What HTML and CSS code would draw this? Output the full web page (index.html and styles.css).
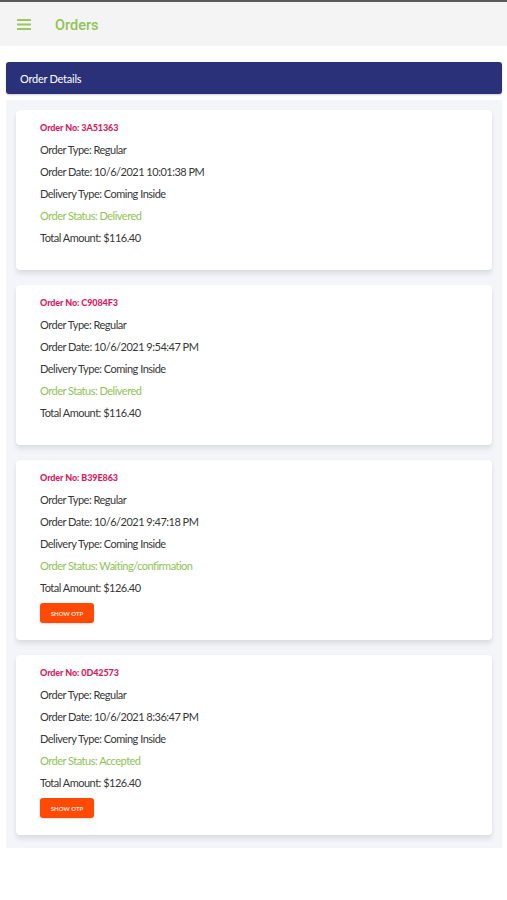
FILE: index.html
```html
<!DOCTYPE html>
<html>
<head>
<meta charset="utf-8">
<link rel="stylesheet" href="styles.css">
</head>
<body>
<header class="topbar">
  <svg class="menu" width="14" height="11" viewBox="0 0 14 11"><rect x="0" y="0" width="14" height="2" fill="#9bc760"/><rect x="0" y="4.5" width="14" height="2" fill="#9bc760"/><rect x="0" y="9" width="14" height="2" fill="#9bc760"/></svg>
  <span class="title">Orders</span>
</header>
<main class="page">
  <div class="section-bar">Order Details</div>
  <div class="list">
    <div class="card">
      <div class="details">
        <div class="row order-no">Order No: 3A51363</div>
        <div class="row">Order Type: Regular</div>
        <div class="row">Order Date: 10/6/2021 10:01:38 PM</div>
        <div class="row">Delivery Type: Coming Inside</div>
        <div class="row status">Order Status: Delivered</div>
        <div class="row">Total Amount: $116.40</div>
      </div>
    </div>
    <div class="card">
      <div class="details">
        <div class="row order-no">Order No: C9084F3</div>
        <div class="row">Order Type: Regular</div>
        <div class="row">Order Date: 10/6/2021 9:54:47 PM</div>
        <div class="row">Delivery Type: Coming Inside</div>
        <div class="row status">Order Status: Delivered</div>
        <div class="row">Total Amount: $116.40</div>
      </div>
    </div>
    <div class="card">
      <div class="details">
        <div class="row order-no">Order No: B39E863</div>
        <div class="row">Order Type: Regular</div>
        <div class="row">Order Date: 10/6/2021 9:47:18 PM</div>
        <div class="row">Delivery Type: Coming Inside</div>
        <div class="row status">Order Status: Waiting/confirmation</div>
        <div class="row">Total Amount: $126.40</div>
      </div>
      <button class="otp">SHOW OTP</button>
    </div>
    <div class="card">
      <div class="details">
        <div class="row order-no">Order No: 0D42573</div>
        <div class="row">Order Type: Regular</div>
        <div class="row">Order Date: 10/6/2021 8:36:47 PM</div>
        <div class="row">Delivery Type: Coming Inside</div>
        <div class="row status">Order Status: Accepted</div>
        <div class="row">Total Amount: $126.40</div>
      </div>
      <button class="otp">SHOW OTP</button>
    </div>
  </div>
</main>
</body>
</html>
```
FILE: styles.css
```css
* { box-sizing: border-box; }
html, body { margin: 0; padding: 0; background: #ffffff; }
body { font-family: Lato, "Open Sans", sans-serif; color: #383838; }

.topbar {
  height: 46px;
  border-top: 2px solid #5a5a5a;
  background: #f4f4f4;
  display: flex;
  align-items: center;
  padding-left: 17px;
}
.menu { display: block; }
.title {
  margin-left: 24px;
  margin-top: 2px;
  font-family: Roboto, sans-serif;
  font-weight: 500;
  font-size: 14.5px;
  color: #8fc355;
}

.page { padding: 16px 5px 0 6px; }

.section-bar {
  height: 32px;
  background: #2b3178;
  border-radius: 3px;
  color: #ffffff;
  font-size: 11px;
  letter-spacing: -0.25px;
  display: flex;
  align-items: center;
  padding-left: 14px;
  box-shadow: 0 1px 2px rgba(0,0,0,0.2);
}

.list {
  margin-top: 6px;
  background: #f4f5f8;
  padding: 10px 10px 13px 10px;
  display: flex;
  flex-direction: column;
  gap: 15px;
}

.card {
  background: #ffffff;
  border-radius: 4px;
  padding: 7px 24px 17px 24px;
  box-shadow: 0 4px 5px rgba(0,0,0,0.09), 0 0 2px rgba(0,0,0,0.06);
}
.details { padding-bottom: 4px; }
.row {
  height: 22px;
  line-height: 22px;
  font-size: 11px;
  letter-spacing: -0.5px;
  white-space: nowrap;
}
.order-no {
  font-size: 9px;
  font-weight: 900;
  letter-spacing: -0.1px;
  color: #d81b60;
}
.status { color: #8fc355; }

.otp {
  display: block;
  width: 54px;
  height: 20px;
  border: none;
  border-radius: 3px;
  background: #ff4a05;
  color: #ffe3d6;
  font-family: Lato, sans-serif;
  font-weight: 700;
  font-size: 6px;
  padding: 0;
  box-shadow: 0 1px 2px rgba(0,0,0,0.15);
}
```
